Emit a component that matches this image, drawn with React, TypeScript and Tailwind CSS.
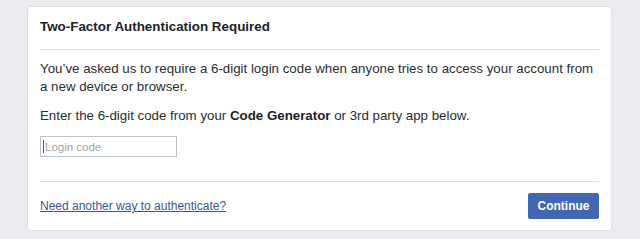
import React from "react";

export default function App() {
  return (
    <div className="h-[239px] w-[640px] bg-[#e9ebee] pt-[6px] pl-[27px] font-['Liberation_Sans',Arial,sans-serif] text-[#1d2129]">
      <div className="w-[585px] h-[225px] bg-white border border-[#dddfe2] rounded-[3px] px-[12px]">
        <div className="pt-[11px] pb-[13px] border-b border-[#dadde1] text-[13.4px] leading-[18px] font-bold">
          Two-Factor Authentication Required
        </div>
        <div className="pt-[10px] pb-[24px] border-b border-[#dadde1] text-[13.3px] leading-[18px] text-[#2a2d33]">
          <p>
            You’ve asked us to require a 6-digit login code when anyone tries to access your account from a new device or browser.
          </p>
          <p className="mt-[11px]">
            Enter the 6-digit code from your <span className="font-bold text-[#1d2129]">Code Generator</span> or 3rd party app below.
          </p>
          <div className="relative mt-[11px] w-[137px]">
            <input
              type="text"
              placeholder="Login code"
              className="block w-[137px] h-[21px] border border-[#bdc1c9] pl-[4px] text-[11.5px] text-[#1d2129] placeholder:text-[#a0a4ab] outline-none"
            />
            <span className="absolute left-[3px] top-[4px] w-px h-[13px] bg-[#555]" />
          </div>
        </div>
        <div className="flex items-center justify-between pt-[11px]">
          <a href="#" className="text-[12px] text-[#365899] underline">
            Need another way to authenticate?
          </a>
          <button className="w-[71px] h-[26px] bg-[#4267b2] border border-[#4267b2] rounded-[2px] text-white text-[12px] font-bold">
            Continue
          </button>
        </div>
      </div>
    </div>
  );
}
